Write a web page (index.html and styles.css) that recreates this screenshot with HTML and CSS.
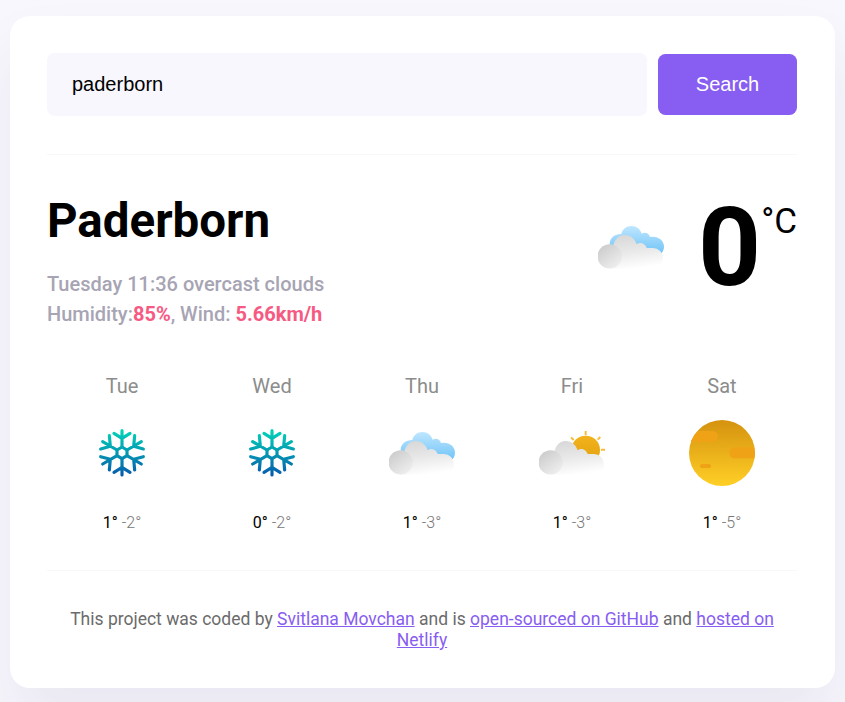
FILE: index.html
```
<!DOCTYPE html>
<html lang="en">
<head>
<meta charset="utf-8">
<title>Weather</title>
<link rel="stylesheet" href="styles.css">
</head>
<body>
<svg class="defs" aria-hidden="true">
  <defs>
    <linearGradient id="blue" gradientUnits="userSpaceOnUse" x1="0" y1="66" x2="0" y2="150"><stop offset="0" stop-color="#bfe6ff"/><stop offset="1" stop-color="#70c4f7"/></linearGradient>
    <linearGradient id="grey" gradientUnits="userSpaceOnUse" x1="110" y1="93" x2="125" y2="196"><stop offset="0" stop-color="#d8d8d8"/><stop offset=".5" stop-color="#e9e9e9"/><stop offset="1" stop-color="#fff"/></linearGradient>
    <linearGradient id="puff" gradientUnits="userSpaceOnUse" x1="40" y1="130" x2="85" y2="190"><stop offset="0" stop-color="#cecece"/><stop offset="1" stop-color="#efefef"/></linearGradient>
    <linearGradient id="snow" gradientUnits="userSpaceOnUse" x1="0" y1="57" x2="0" y2="200"><stop offset="0" stop-color="#00d8b8"/><stop offset="1" stop-color="#0758ad"/></linearGradient>
    <linearGradient id="gold" gradientUnits="userSpaceOnUse" x1="0" y1="30" x2="0" y2="228"><stop offset="0" stop-color="#d5920f"/><stop offset="1" stop-color="#ffcf26"/></linearGradient>
    <linearGradient id="halfsun" gradientUnits="userSpaceOnUse" x1="0" y1="76" x2="0" y2="150"><stop offset="0" stop-color="#f1b31c"/><stop offset="1" stop-color="#e5a312"/></linearGradient>
    <clipPath id="disc"><circle cx="141" cy="129" r="99"/></clipPath>
    <g id="cloud">
      <path fill="url(#grey)" d="M62 194V145H72C70 113 85 93 107 93C125 93 138 105 143 121C150 114 167 114 173 132H192A30 31 0 0 1 192 194Z"/>
      <circle fill="url(#puff)" cx="62" cy="157" r="36.500"/>
    </g>
    <symbol id="overcast" viewBox="27 30 198 198">
      <path fill="url(#blue)" d="M62 121C62 102 77 90 97 90C100 76 112 66 127 66C143 66 154 76 158 89C166 83 180 86 183 99C207 95 225 109 225 128C225 136 222 142 218 147L80 150Z"/>
      <use href="#cloud"/>
    </symbol>
    <symbol id="partly" viewBox="27 30 198 198">
      <circle fill="url(#halfsun)" cx="167" cy="120" r="43"/>
      <path stroke="#f5bd3c" stroke-width="6" fill="none" d="M167 63V76M123 82L131 90M211 81L203 89M213 119H225"/>
      <use href="#cloud"/>
    </symbol>
    <symbol id="snowflake" viewBox="27 30 198 198">
      <g stroke="url(#snow)" fill="none" stroke-width="9.500" stroke-linecap="round" stroke-linejoin="round">
        <path d="M126 111L141 120V137L126 146L111 137V120Z"/>
        <path d="M126 110V62M126 85L102 70M126 85L150 70M126 147V195M126 172L102 187M126 172L150 187"/>
        <path d="M141 120L184 95M161 109L164 77M161 109L190 117M111 120L68 95M91 109L88 77M91 109L62 117"/>
        <path d="M141 137L184 162M161 148L164 180M161 148L190 140M111 137L68 162M91 148L88 180M91 148L62 140"/>
      </g>
    </symbol>
    <symbol id="clear" viewBox="42 30 198 198">
      <circle fill="url(#gold)" cx="141" cy="129" r="99"/>
      <g fill="#efa216" clip-path="url(#disc)">
        <rect x="20" y="63" width="109" height="33" rx="16.500"/>
        <rect x="163" y="112" width="100" height="33" rx="16.500"/>
        <rect x="75" y="162" width="33" height="12" rx="6"/>
      </g>
    </symbol>
  </defs>
</svg>
<main class="card">
  <form class="search">
    <input class="search-input" type="text" value="paderborn">
    <button class="search-button" type="button">Search</button>
  </form>
  <section class="current">
    <div>
      <h1 class="city">Paderborn</h1>
      <p class="details">Tuesday 11:36 overcast clouds<br>Humidity:<strong>85%</strong>, Wind: <strong>5.66km/h</strong></p>
    </div>
    <div class="temperature">
      <svg class="icon now"><use href="#overcast"/></svg>
      <span class="degrees">0</span>
      <span class="unit">°C</span>
    </div>
  </section>
  <section class="forecast">
    <div class="day"><div class="name">Tue</div><svg class="icon"><use href="#snowflake"/></svg><div class="range"><b>1°</b> -2°</div></div>
    <div class="day"><div class="name">Wed</div><svg class="icon"><use href="#snowflake"/></svg><div class="range"><b>0°</b> -2°</div></div>
    <div class="day"><div class="name">Thu</div><svg class="icon"><use href="#overcast"/></svg><div class="range"><b>1°</b> -3°</div></div>
    <div class="day"><div class="name">Fri</div><svg class="icon"><use href="#partly"/></svg><div class="range"><b>1°</b> -3°</div></div>
    <div class="day"><div class="name">Sat</div><svg class="icon"><use href="#clear"/></svg><div class="range"><b>1°</b> -5°</div></div>
  </section>
  <footer class="footer">This project was coded by <a href="#">Svitlana Movchan</a> and is <a href="#">open-sourced on GitHub</a> and <a href="#">hosted on Netlify</a></footer>
</main>
</body>
</html>
```
FILE: styles.css
```
* { box-sizing: border-box; }
body {
  margin: 0;
  padding: 16px 10px 14px;
  height: 702px;
  overflow: hidden;
  background: #f8f7fd;
  font-family: Roboto, sans-serif;
}
.defs { display: block; width: 0; height: 0; }
.card {
  height: 672px;
  padding: 37px 38px 37px 37px;
  border-radius: 20px;
  background: #fff;
  box-shadow: 0 37.500px 62.500px rgba(65, 50, 100, 0.08);
}
.search {
  display: flex;
  align-items: flex-start;
  justify-content: space-between;
  height: 102px;
  border-bottom: 1px solid #f8f8f8;
}
.search-input, .search-button {
  border: 0;
  border-radius: 7.500px;
  font: 20px "Liberation Sans", Arial, sans-serif;
}
.search-input {
  width: 600px;
  height: 63px;
  flex: none;
  padding: 0 25px;
  background: #f8f7fd;
  color: #000;
}
.search-button {
  width: 139px;
  height: 61px;
  margin-top: 1px;
  background: #885df1;
  color: #fff;
}
.current {
  display: flex;
  justify-content: space-between;
  height: 216px;
  padding-top: 38px;
}
.city {
  margin: 0;
  font-size: 47.500px;
  font-weight: 700;
  line-height: 56px;
}
.details {
  margin: 20px 0 0;
  color: #a7a4b4;
  font-size: 20px;
  font-weight: 500;
  line-height: 30px;
}
.details strong { color: #f65a83; font-weight: 700; }
.temperature { display: flex; align-items: flex-start; }
.icon { display: block; width: 66px; height: 66px; }
.now { margin: 21px 34px 0 0; }
.degrees {
  font-size: 110px;
  font-weight: 700;
  line-height: 110px;
}
.unit {
  font-size: 35px;
  line-height: 42px;
  margin-top: 8px;
}
.forecast {
  display: grid;
  grid-template-columns: repeat(5, 1fr);
  height: 200px;
  border-bottom: 1px solid #f8f8f8;
}
.day { display: flex; flex-direction: column; align-items: center; }
.name { height: 49px; line-height: 30px; font-size: 20px; color: #8c8c8c; }
.range { margin-top: 27px; font-size: 16px; font-weight: 300; line-height: 20px; color: #777; }
.range b { color: #000; font-weight: 400; }
.footer {
  padding-top: 38px;
  text-align: center;
  font-size: 17.500px;
  line-height: 21px;
  color: #6b6b6b;
}
.footer a { color: #885df1; }
```
